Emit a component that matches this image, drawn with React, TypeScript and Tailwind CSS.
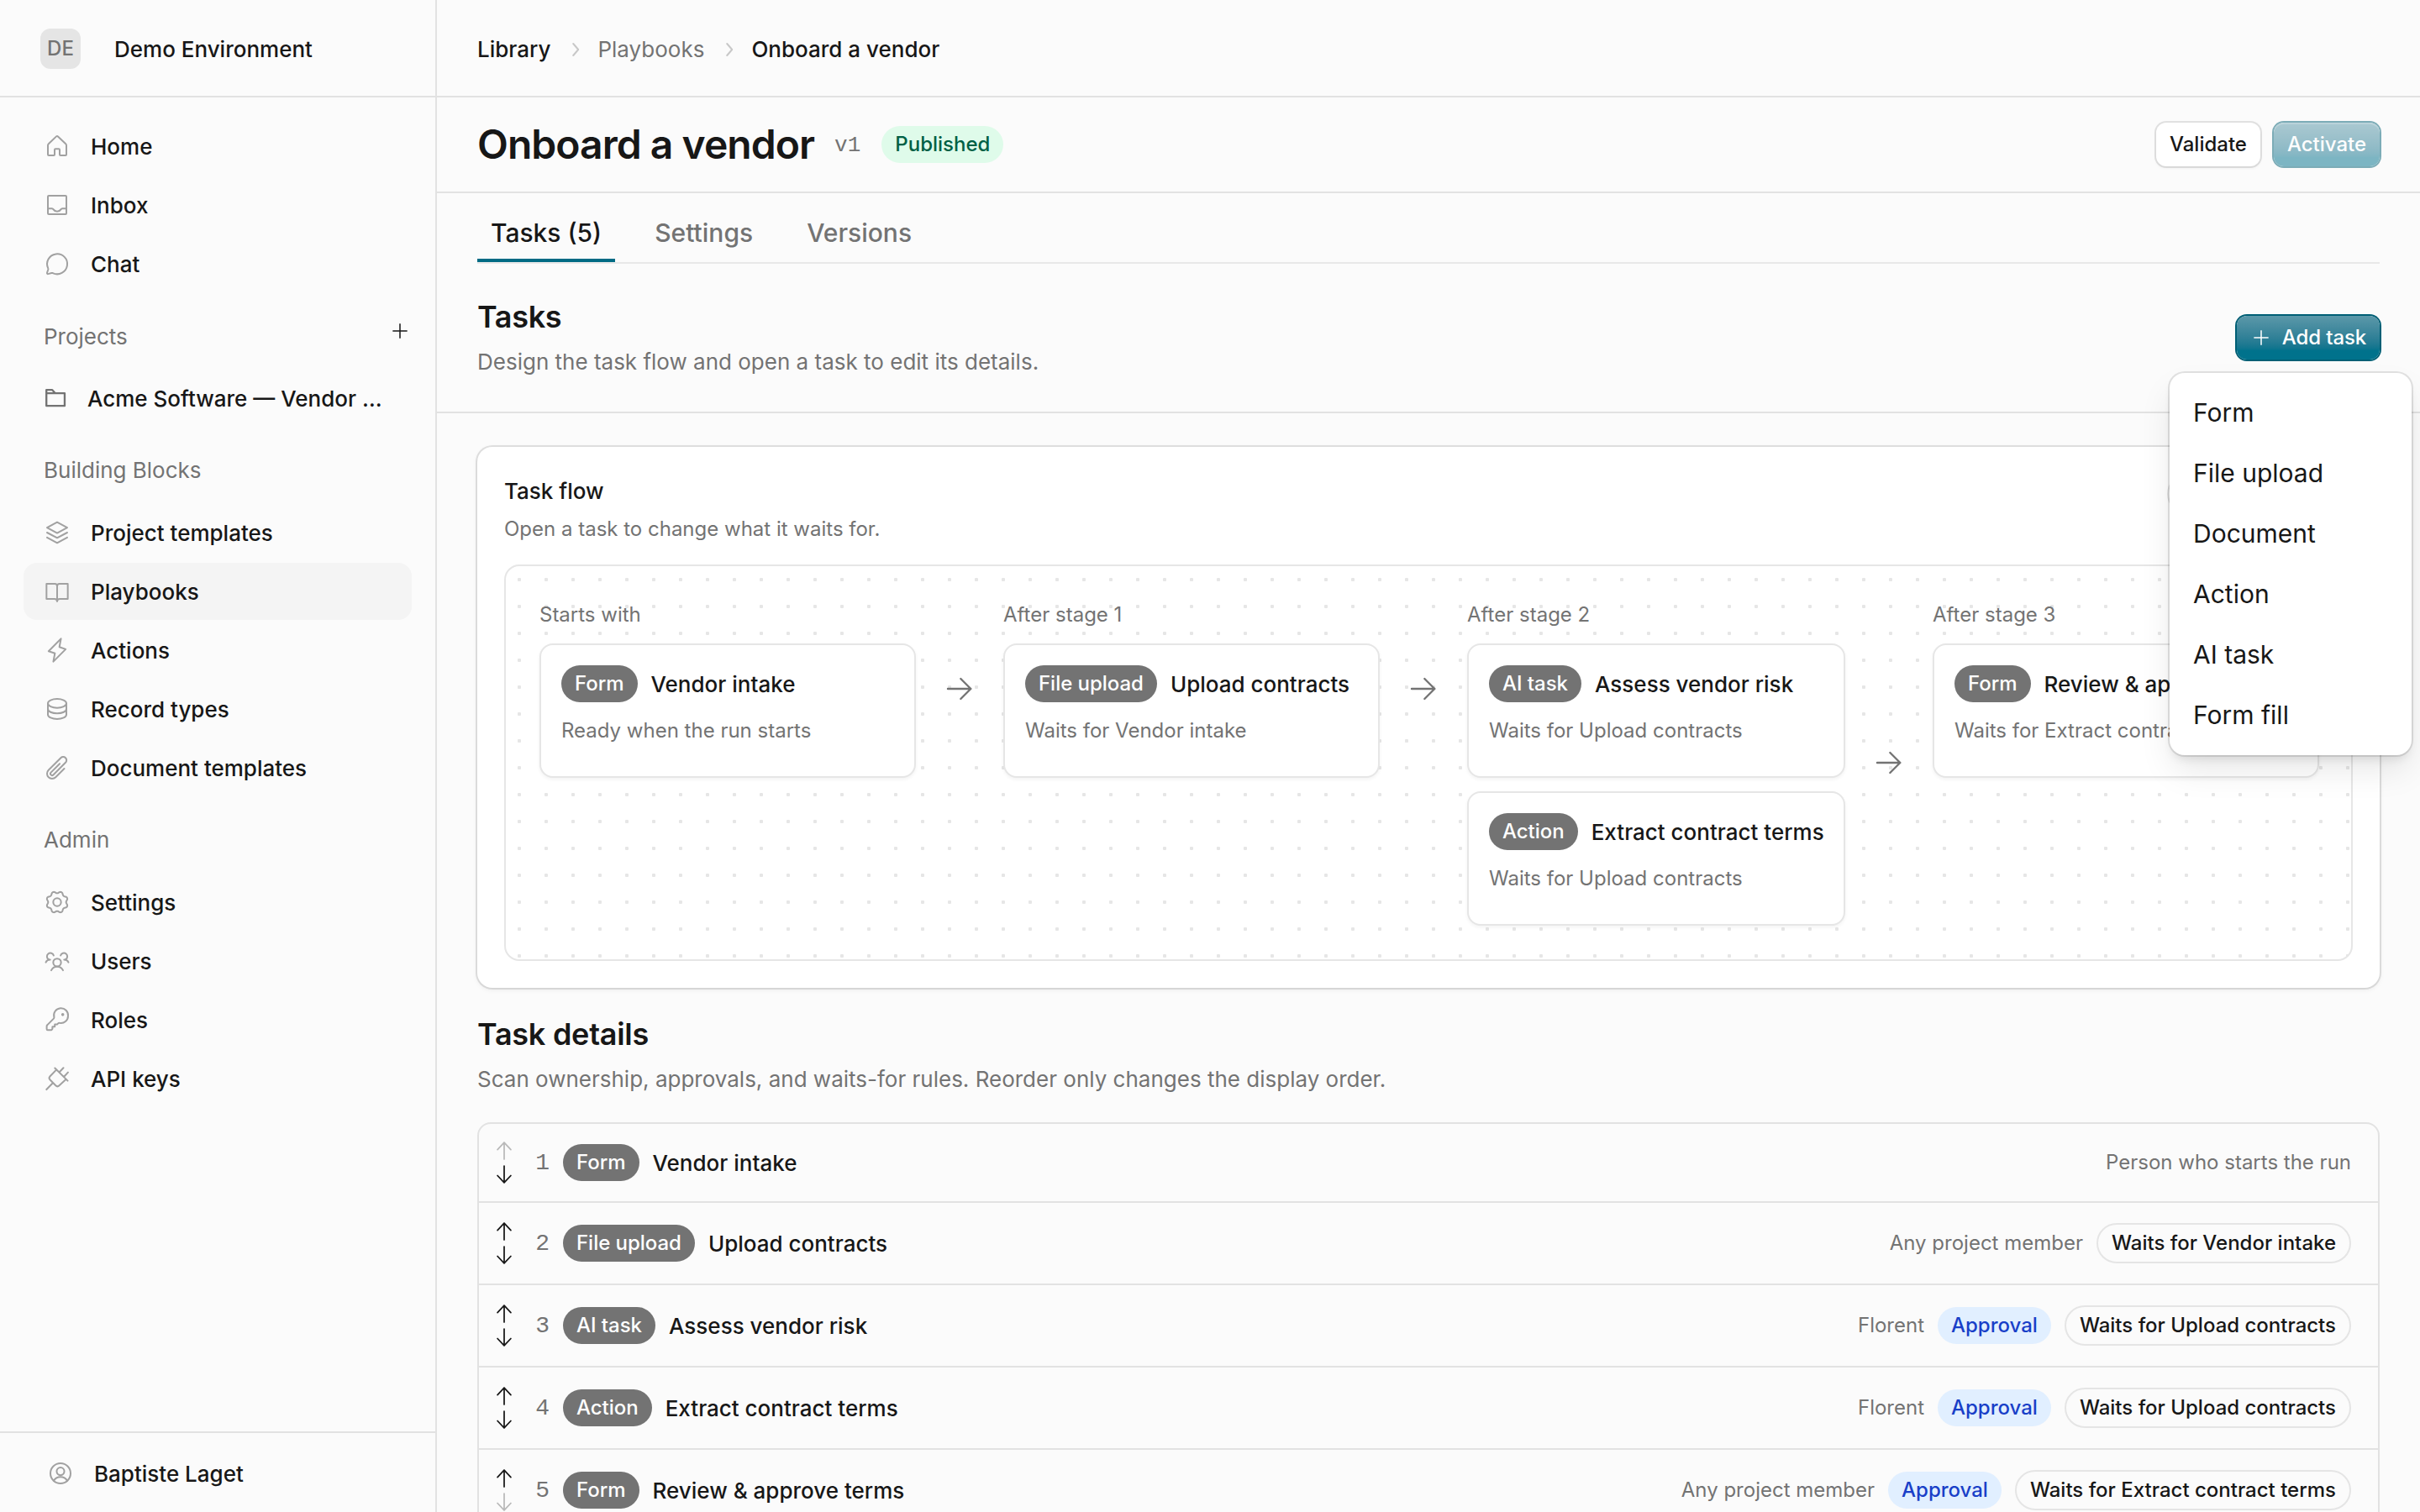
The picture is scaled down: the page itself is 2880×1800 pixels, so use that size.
import type { ReactNode } from 'react';
import clsx from 'clsx';

type TaskType = 'Form' | 'File upload' | 'AI task' | 'Action';

interface Task {
  type: TaskType;
  name: string;
  owner: string;
  approval?: boolean;
  waitsFor?: string;
}

const tasks: Task[] = [
  { type: 'Form', name: 'Vendor intake', owner: 'Person who starts the run' },
  { type: 'File upload', name: 'Upload contracts', owner: 'Any project member', waitsFor: 'Vendor intake' },
  { type: 'AI task', name: 'Assess vendor risk', owner: 'Florent', approval: true, waitsFor: 'Upload contracts' },
  { type: 'Action', name: 'Extract contract terms', owner: 'Florent', approval: true, waitsFor: 'Upload contracts' },
  { type: 'Form', name: 'Review & approve terms', owner: 'Any project member', approval: true, waitsFor: 'Extract contract terms' },
];

const stages = [
  { label: 'Starts with', tasks: [tasks[0]], className: 'w-[448px]' },
  { label: 'After stage 1', tasks: [tasks[1]], className: 'w-[448px]' },
  { label: 'After stage 2', tasks: [tasks[2], tasks[3]], className: 'w-[450px]' },
  { label: 'After stage 3', tasks: [tasks[4]], className: 'w-[460px]' },
];

const menuItems = ['Form', 'File upload', 'Document', 'Action', 'AI task', 'Form fill'];

// Cog outline: eight soft lobes around the centre
const cogPath =
  Array.from({ length: 97 }, (_, i) => {
    const a = (i / 96) * Math.PI * 2;
    const wave = -Math.cos(8 * a);
    const r = 8.85 + 0.85 * Math.sign(wave) * Math.pow(Math.abs(wave), 0.8);
    return `${i ? 'L' : 'M'}${(12 + r * Math.sin(a)).toFixed(2)} ${(12 - r * Math.cos(a)).toFixed(2)}`;
  }).join('') + 'Z';

const icons = {
  home: <path d="M3.75 11.3v8.2c0 .41.34.75.75.75H9c.41 0 .75-.34.75-.75v-4.25c0-.41.34-.75.75-.75h3c.41 0 .75.34.75.75v4.25c0 .41.34.75.75.75h4.5c.41 0 .75-.34.75-.75v-8.2c0-.53-.21-1.04-.59-1.41L12.7 3.3a1 1 0 0 0-1.4 0L4.34 9.89c-.38.37-.59.88-.59 1.41Z" />,
  inbox: (
    <>
      <rect x="3.75" y="3.75" width="16.5" height="16.5" rx=".75" />
      <path d="M3.75 15.25h3.6c.55 0 1.05.32 1.35.8.65 1.02 1.85 1.7 3.3 1.7s2.65-.68 3.3-1.7c.3-.48.8-.8 1.35-.8h3.6" />
    </>
  ),
  chat: <path d="M3.9 16c.2.4.2.7.1 1.1L3 20.1a.8.8 0 0 0 1 1l3-.8c.4-.1.7-.1 1.1 0A9 9 0 1 0 3.9 16Z" />,
  layers: <path d="m12 2.75 9 4.85-9 4.8-9-4.8 9-4.85ZM3 12l9 4.75L21 12M3 16.4l9 4.85 9-4.85" />,
  book: <path d="M12 7.25a2 2 0 0 0-2-2H2.5v13.5H9.6c1.4 0 2.4.9 2.4 2.25 0-1.35 1-2.25 2.4-2.25h7.1V5.25H14a2 2 0 0 0-2 2ZM12 7.25V21" />,
  bolt: <path d="M15.4 1.75 4.4 12.9l5.6 1.9-1.4 7.45 11-11.1L14 9.2l1.4-7.45Z" />,
  database: <path d="M20.25 7c0 2.2-3.7 4-8.25 4S3.75 9.2 3.75 7 7.45 3 12 3s8.25 1.8 8.25 4ZM3.75 7v10c0 2.2 3.7 4 8.25 4s8.25-1.8 8.25-4V7M20.25 12c0 2.2-3.7 4-8.25 4s-8.25-1.8-8.25-4" />,
  clip: <path d="m18.375 12.739-7.693 7.693a4.5 4.5 0 0 1-6.364-6.364l10.94-10.94A3 3 0 1 1 19.5 7.372L8.552 18.32a1.5 1.5 0 0 1-2.112-2.13l7.81-7.81" />,
  cog: (
    <>
      <path d={cogPath} />
      <circle cx="12" cy="12" r="3.5" />
    </>
  ),
  users: (
    <>
      <circle cx="12" cy="13.4" r="3.5" />
      <path d="M6.75 20.4c.9-2.1 2.8-3.4 5.25-3.4s4.35 1.3 5.25 3.4M8.9 7.2a3.05 3.05 0 1 0-4.3 3.5M1.9 13.2c.6-1.4 1.9-2.3 3.9-2.3M15.1 7.2a3.05 3.05 0 1 1 4.3 3.5M22.1 13.2c-.6-1.4-1.9-2.3-3.9-2.3" />
    </>
  ),
  key: (
    <>
      <path d="M21.75 8.6a6.4 6.4 0 0 1-7.5 6.3c-.5-.1-1 0-1.4.4l-.9.9H9.9v1.9H7.8v2l-.8 1H3.6a.9.9 0 0 1-.9-.9v-2.3c0-.5.2-1 .6-1.3l5.6-5.6c.4-.4.5-.9.4-1.4a6.35 6.35 0 1 1 12.45-1Z" />
      <circle cx="17" cy="7.4" r=".6" fill="currentColor" />
    </>
  ),
  plug: <path d="M10 2.6 21.4 14M11.4 4 5.7 9.9a2.3 2.3 0 0 0 0 3.2l5 5.1c.9.9 2.3.9 3.2 0L20 12.6M2.5 21.8l5.3-5.5M13.9 6.4l3.7-4M18 10.5l3.7-4" />,
  folder: <path d="M2.75 6.9V3.6h6l2.9 3.3H21.4v12.9H2.75V6.9Zm0 0H12" />,
  user: (
    <>
      <circle cx="12" cy="12" r="9" />
      <circle cx="12" cy="10.2" r="3.4" />
      <path d="M6 18.6c1.2-2.1 3.3-3.4 6-3.4s4.8 1.3 6 3.4" />
    </>
  ),
  plus: <path d="M12 4.5v15M4.5 12h15" />,
  chevron: <path d="m11.2 5 6 7-6 7" />,
  right: <path d="M1.5 12h20.5M13 3l9 9-9 9" />,
  up: <path d="M12 20.5V3.6M5.2 10.8 12 3.6l6.8 7.2" />,
  down: <path d="M12 3.5v17M5.2 13.3l6.8 7.2 6.8-7.2" />,
};

type IconName = keyof typeof icons;

function Icon({ name, className, stroke = 1.5 }: { name: IconName; className?: string; stroke?: number }) {
  return (
    <svg
      viewBox="0 0 24 24"
      fill="none"
      stroke="currentColor"
      strokeWidth={stroke}
      strokeLinecap="round"
      strokeLinejoin="round"
      className={clsx('shrink-0', className)}
    >
      {icons[name]}
    </svg>
  );
}

function NavItem({ icon, label, active }: { icon: IconName; label: string; active?: boolean }) {
  return (
    <a className={clsx('flex h-[68px] items-center gap-6 rounded-2xl px-6 font-medium', active && 'bg-[#f4f4f4]')}>
      <Icon name={icon} className="size-8 text-[#a1a1a1]" />
      <span className="pt-0.5">{label}</span>
    </a>
  );
}

function NavLabel({ children }: { children: ReactNode }) {
  return <div className="flex h-[72px] items-center px-6 text-[#737373]">{children}</div>;
}

function Sidebar() {
  return (
    <aside className="flex w-[520px] shrink-0 flex-col border-r-2 border-[#e2e2e2]">
      <div className="flex h-[116px] shrink-0 items-center gap-10 border-b-2 border-[#e2e2e2] px-12 pt-0.5">
        <div className="flex size-12 items-center justify-center rounded-xl bg-[#e5e5e5] text-2xl font-medium text-[#737373]">
          DE
        </div>
        <span className="pt-0.5 font-medium">Demo Environment</span>
      </div>

      <nav className="flex flex-1 flex-col px-7 pt-6">
        <div className="flex flex-col gap-0.5">
          <NavItem icon="home" label="Home" />
          <NavItem icon="inbox" label="Inbox" />
          <NavItem icon="chat" label="Chat" />
        </div>

        {/* Projects */}
        <div className="mt-[17px] flex h-[72px] items-center justify-between pr-px">
          <NavLabel>Projects</NavLabel>
          <Icon name="plus" className="mb-3.5 size-[26px]" stroke={1.4} />
        </div>
        <a className="mt-[3px] flex h-[68px] items-center gap-6 px-6 font-medium">
          <Icon name="folder" className="size-7 text-[#737373]" stroke={2} />
          <span className="truncate pt-0.5">Acme Software — Vendor …</span>
        </a>

        {/* Building blocks */}
        <div className="mt-4 flex flex-col gap-1">
          <NavLabel>Building Blocks</NavLabel>
          <div className="flex flex-col gap-0.5">
            <NavItem icon="layers" label="Project templates" />
            <NavItem icon="book" label="Playbooks" active />
            <NavItem icon="bolt" label="Actions" />
            <NavItem icon="database" label="Record types" />
            <NavItem icon="clip" label="Document templates" />
          </div>
        </div>

        {/* Admin */}
        <div className="mt-4 flex flex-col gap-1">
          <NavLabel>Admin</NavLabel>
          <div className="flex flex-col gap-0.5">
            <NavItem icon="cog" label="Settings" />
            <NavItem icon="users" label="Users" />
            <NavItem icon="key" label="Roles" />
            <NavItem icon="plug" label="API keys" />
          </div>
        </div>
      </nav>

      <div className="flex h-24 shrink-0 items-center gap-6 border-t-2 border-[#e2e2e2] px-14 pt-0.5 font-medium">
        <Icon name="user" className="size-8 text-[#a1a1a1]" />
        <span className="pt-0.5">Baptiste Laget</span>
      </div>
    </aside>
  );
}

function TypeBadge({ type }: { type: TaskType }) {
  return (
    <span className="flex h-11 shrink-0 items-center rounded-full bg-[#737373] px-4 text-2xl font-medium tracking-[-0.03px] text-white">
      {type}
    </span>
  );
}

function TaskCard({ task }: { task: Task }) {
  return (
    <div className="h-[160px] overflow-hidden rounded-2xl border-2 border-[#e6e6e6] bg-white p-6 shadow-[0_2px_4px_rgba(0,0,0,0.05)]">
      <div className="flex h-11 items-center gap-4">
        <TypeBadge type={task.type} />
        <span className="pt-0.5 font-medium whitespace-nowrap">{task.name}</span>
      </div>
      <p className="mt-4 text-2xl leading-9 whitespace-nowrap text-[#737373]">
        {task.waitsFor ? `Waits for ${task.waitsFor}` : 'Ready when the run starts'}
      </p>
    </div>
  );
}

function TaskFlow() {
  return (
    <section className="h-[644px] rounded-[18px] bg-white p-8 shadow-[0_0_0_2px_rgba(0,0,0,0.1),0_2px_6px_rgba(0,0,0,0.08)]">
      <div className="flex items-start justify-between">
        <div>
          <h3 className="pt-px leading-10 font-medium">Task flow</h3>
          <p className="mt-[7px] text-2xl leading-9 text-[#737373]">Open a task to change what it waits for.</p>
        </div>
        <span className="h-12 w-[221px] rounded-full border-2 border-[#e5e5e5]" />
      </div>
      <div className="mt-6 flex h-[472px] items-start rounded-[18px] border-2 border-[#e6e6e6] bg-[radial-gradient(circle,#e6e6e6_2px,transparent_2.5px)] bg-[size:32px_32px] p-10">
        {stages.map((stage, i) => (
          <div key={stage.label} className="flex items-center">
            <div className={clsx('flex flex-col gap-4', stage.className)}>
              <div className="text-2xl leading-9 text-[#737373]">{stage.label}</div>
              {stage.tasks.map((task) => (
                <TaskCard key={task.name} task={task} />
              ))}
            </div>
            {i < stages.length - 1 && <Icon name="right" className="mx-9 size-8 text-[#737373]" stroke={1.8} />}
          </div>
        ))}
      </div>
    </section>
  );
}

function TaskRow({ task, index }: { task: Task; index: number }) {
  return (
    <div className="flex items-center gap-4 border-b-2 border-[#e2e2e2] py-6 pr-8 pl-4">
      <div className="-my-6 flex flex-col">
        <Icon name="up" className={clsx('size-7', index === 0 && 'text-[#b9b9b9]')} />
        <Icon name="down" className={clsx('size-7', index === tasks.length - 1 && 'text-[#b9b9b9]')} />
      </div>
      <span className="w-6 pt-px text-right font-['Liberation_Mono',monospace] text-[28px] text-[#737373]">{index + 1}</span>
      <TypeBadge type={task.type} />
      <span className="pt-0.5 font-medium">{task.name}</span>
      <div className="ml-auto flex items-center gap-4 text-2xl">
        <span className="text-[#737373]">{task.owner}</span>
        {task.approval && (
          <span className="flex h-11 items-center rounded-full bg-[#e1efff] px-4 font-medium text-[#193fc8]">Approval</span>
        )}
        {task.waitsFor && (
          <span className="flex h-12 items-center rounded-full border-2 border-[#e5e5e5] px-4 font-medium">
            Waits for {task.waitsFor}
          </span>
        )}
      </div>
    </div>
  );
}

function AddTaskMenu() {
  return (
    <div className="absolute top-[444px] right-[10px] w-72 rounded-[18px] bg-white px-3 pt-[11px] pb-3 shadow-[0_0_0_2px_rgba(0,0,0,0.1),0_8px_12px_-4px_rgba(0,0,0,0.1),0_20px_40px_-4px_rgba(0,0,0,0.1)]">
      {menuItems.map((item) => (
        <div key={item} className="flex h-[72px] items-center px-4 text-[30px]">
          {item}
        </div>
      ))}
    </div>
  );
}

export default function App() {
  return (
    <div className="relative flex h-[1800px] w-[2880px] overflow-hidden bg-[#fbfbfb] font-[Inter,sans-serif] text-[26px] leading-10 text-[#171717]">
      <Sidebar />

      <main className="flex min-w-0 flex-1 flex-col">
        {/* Breadcrumb */}
        <header className="flex h-[116px] shrink-0 items-center gap-4 border-b-2 border-[#e2e2e2] px-12 pt-1">
          <span className="font-medium">Library</span>
          <Icon name="chevron" className="size-6 text-[#c8c8c8]" stroke={2} />
          <span className="text-[#737373]">Playbooks</span>
          <Icon name="chevron" className="size-6 text-[#c8c8c8]" stroke={2} />
          <span className="font-medium">Onboard a vendor</span>
        </header>

        {/* Title */}
        <div className="flex h-[114px] shrink-0 items-center border-b-2 border-[#e2e2e2] px-12">
          <h1 className="text-5xl font-semibold tracking-[-0.02em]">Onboard a vendor</h1>
          <span className="ml-6 pt-0.5 font-['Liberation_Mono',monospace] text-[26px] text-[#737373]">v1</span>
          <span className="ml-[25px] flex h-11 items-center rounded-full bg-[#dffbea] px-4 text-2xl font-medium text-[#006045]">
            Published
          </span>
          <div className="ml-auto flex gap-4 text-2xl font-medium">
            <button className="h-[52px] w-[124px] rounded-xl bg-white shadow-[0_0_0_2px_rgba(0,0,0,0.1),0_2px_4px_rgba(0,0,0,0.06)]">
              Validate
            </button>
            <button className="h-[52px] w-[126px] rounded-xl bg-linear-to-b from-[#5b98a9] to-[#00728c] to-80% text-white opacity-50 shadow-[0_0_0_2px_#005f75,inset_0_2px_0_rgba(255,255,255,0.2)]">
              Activate
            </button>
          </div>
        </div>

        {/* Tabs */}
        <div className="mx-12 mt-[18px] flex h-[66px] shrink-0 border-b-2 border-[#e8e8e8] text-[30px] font-medium text-[#737373]">
          <span className="flex h-16 items-center border-b-4 border-[#006b84] px-4 pb-0.5 text-[#171717]">Tasks (5)</span>
          <span className="ml-[31px] flex h-[60px] items-center px-4 pb-0.5">Settings</span>
          <span className="ml-8 flex h-[60px] items-center px-4 pb-0.5">Versions</span>
        </div>

        <div className="flex h-[178px] shrink-0 items-center justify-between border-b-2 border-[#e2e2e2] px-12">
          <div>
            <h2 className="text-4xl leading-[48px] font-semibold tracking-[-0.3px]">Tasks</h2>
            <p className="mt-2.5 text-[#737373]">Design the task flow and open a task to edit its details.</p>
          </div>
          <button className="flex h-[52px] w-[170px] items-center justify-center gap-3 rounded-xl bg-linear-to-b from-[#5b98a9] to-[#00728c] to-80% text-2xl font-medium tracking-[-0.1px] text-white shadow-[0_0_0_2px_#005f75]">
            <Icon name="plus" className="size-[26px]" stroke={1.4} />
            Add task
          </button>
        </div>

        <div className="flex flex-col px-12 pt-10">
          <TaskFlow />

          <h2 className="mt-[31px] text-4xl leading-[48px] font-semibold tracking-[-0.25px]">Task details</h2>
          <p className="mt-2.5 text-[#737373]">
            Scan ownership, approvals, and waits-for rules. Reorder only changes the display order.
          </p>

          <div className="mt-[31px] rounded-2xl border-2 border-[#e2e2e2]">
            {tasks.map((task, i) => (
              <TaskRow key={task.name} task={task} index={i} />
            ))}
          </div>
        </div>
      </main>

      <AddTaskMenu />
    </div>
  );
}
